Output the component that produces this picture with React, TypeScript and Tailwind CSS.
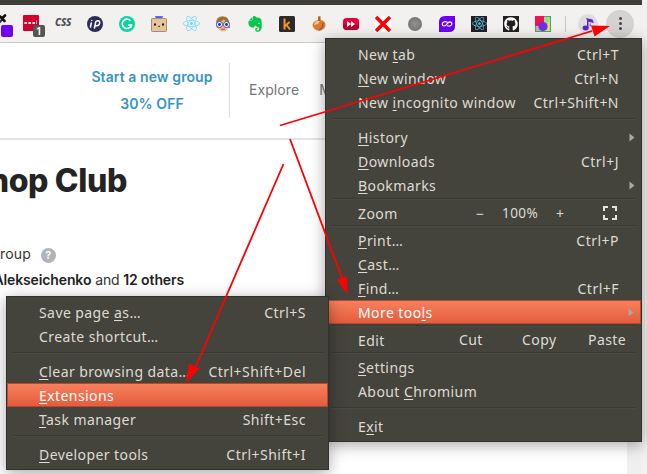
import React from "react";
import { FaReact, FaGithub, FaEvernote } from "react-icons/fa";

type RowProps = {
  label: string;
  mnemonic?: number;
  shortcut?: string;
  active?: boolean;
  arrow?: boolean;
};

function Label({ text, mnemonic }: { text: string; mnemonic?: number }) {
  if (mnemonic === undefined) return <>{text}</>;
  return (
    <>
      {text.slice(0, mnemonic)}
      <span className="underline decoration-1 underline-offset-2 [text-decoration-skip-ink:none]">{text[mnemonic]}</span>
      {text.slice(mnemonic + 1)}
    </>
  );
}

function Row({ label, mnemonic, shortcut, active, arrow }: RowProps) {
  return (
    <div
      className={
        "flex h-6 shrink-0 items-center justify-between whitespace-nowrap " +
        (active
          ? "border border-[#b14a30] bg-linear-to-b from-[#f7805e] to-[#e45c3b] pl-[31px] pr-[22px] text-white"
          : "pl-8 pr-[22px]")
      }
    >
      <span className="pt-0.5 leading-[16px]">
        <Label text={label} mnemonic={mnemonic} />
      </span>
      {shortcut && <span className="pt-0.5 leading-[16px] tracking-[0.48px]">{shortcut}</span>}
      {arrow && (
        <svg className="-mr-4 h-[9px] w-[6px]" viewBox="0 0 6 9">
          <path d="M0.5 0.5 5.5 4.5 0.5 8.5Z" fill="#a9a8a2" />
        </svg>
      )}
    </div>
  );
}

function Separator({ className }: { className: string }) {
  return (
    <div className={"shrink-0 px-[5px] " + className}>
      <div className="h-0.5 border-b border-t border-b-[#4a4a43] border-t-[#3a3a34]" />
    </div>
  );
}

function Slot({ children }: { children?: React.ReactNode }) {
  return <div className="flex w-8 shrink-0 items-center justify-center">{children}</div>;
}

function Toolbar() {
  return (
    <div className="flex h-[38px] w-[642px] items-center overflow-hidden border-b border-[#c9c9c8] bg-[#f2f1f0]">
      <div className="flex w-[15px] shrink-0">
        <svg className="h-8 w-[15px]" viewBox="0 0 15 32">
          <path d="M-1 15 2.500 11" stroke="#333" strokeWidth="2" />
          <path d="M0 8.500 4.500 13M2 10.500 5 7.500" stroke="#111" strokeWidth="2.600" strokeLinecap="round" />
          <rect x="1" y="17" width="12" height="12" rx="2" fill="#7300ee" />
        </svg>
      </div>
      <Slot>
        <svg className="h-8 w-8" viewBox="0 0 32 32">
          <rect x="8" y="7" width="16" height="16" rx="1" fill="#d5002b" />
          <path d="M9.500 15h2.500M13.500 15h2.500M17.500 15h2.500" stroke="#fff" strokeWidth="2" />
          <path d="M21.500 12.500v3.500" stroke="#f08a9c" />
          <rect x="18" y="17" width="12" height="12" rx="2" fill="#555" />
          <text x="24" y="27" textAnchor="middle" fill="#fff" fontSize="11" fontWeight="600" fontFamily="Noto Sans, sans-serif">1</text>
        </svg>
      </Slot>
      <Slot>
        <span className="pb-0.5 font-['Noto_Sans',sans-serif] text-[10px] font-extrabold italic tracking-[-0.4px] text-[#505050]">CSS</span>
      </Slot>
      <Slot>
        <svg className="size-4" viewBox="0 0 16 16" fill="none" stroke="#fff" strokeWidth="1.500" strokeLinecap="round">
          <circle cx="8" cy="8" r="8" fill="#2d2b5b" stroke="none" />
          <path d="M4.300 7 3.500 11M4.800 4.500v.1M7.500 12 8.700 6Q9 4.800 11 4.800 13 4.900 12.700 7 12.200 10 9.500 9.700H8.200" />
        </svg>
      </Slot>
      <Slot>
        <svg className="size-4" viewBox="0 0 16 16" fill="none" stroke="#fff" strokeWidth="1.600">
          <circle cx="8" cy="8" r="8" fill="#08d59b" stroke="none" />
          <path d="M11.500 4.700A4.700 4.700 0 1 0 12.500 9H9M12.500 9 11.500 12" />
        </svg>
      </Slot>
      <Slot>
        <svg className="size-4" viewBox="0 0 16 16">
          <path d="M4 0h8l-1 3H5Z" fill="#5967e8" />
          <rect x=".5" y="2.500" width="15" height="13" rx=".7" fill="#e5c59a" stroke="#a98d70" />
          <path d="M3 7.500h2v2H3ZM11 7.500h2v2h-2Z" fill="#171717" />
          <path d="M7 10q1 1.500 2 0" stroke="#432" fill="none" />
        </svg>
      </Slot>
      <Slot><FaReact className="size-[17px] text-[#76d8f8]" /></Slot>
      <Slot>
        <svg className="size-4" viewBox="0 0 16 16">
          <path d="M2 12Q-1 2 6 0.500 15-1 15 12Z" fill="#a87838" />
          <ellipse cx="8" cy="9.500" rx="5.500" ry="6" fill="#f2b780" />
          <path d="M3 5Q8 6 9 2 10 6 14 6L12 2 8 1 4 2Z" fill="#98702f" />
          <g fill="#fff" stroke="#3c58a8" strokeWidth="1"><circle cx="4.500" cy="8.500" r="3" /><circle cx="11.500" cy="8.500" r="3" /></g>
          <circle cx="4.500" cy="8.500" r="1.400" fill="#2414d8" /><circle cx="11.500" cy="8.500" r="1.400" fill="#2414d8" />
          <path d="M6 13.200h4" stroke="#c05a42" />
        </svg>
      </Slot>
      <Slot><FaEvernote className="size-[18px] text-[#08c650]" /></Slot>
      <Slot>
        <svg className="size-4" viewBox="0 0 16 16">
          <rect width="16" height="16" rx="1.500" fill="#2b2b2b" />
          <path d="M5.500 2.500v11M10.500 6 6 10M7.500 9l3.500 4.500" stroke="#f39432" strokeWidth="2" fill="none" />
        </svg>
      </Slot>
      <Slot>
        <svg className="size-4" viewBox="0 0 16 16">
          <path d="M7.500 0h2l.3 4Q15 5 14.500 10 13 14 8.500 15 2 14 1.500 9 2 5 7 4Z" fill="#d67a35" />
          <path d="M4 6Q7 4 9 5L7 8 3 9Z" fill="#f8c58b" />
          <path d="M8 1 8 5M12 7Q13 11 8.500 14" stroke="#914421" fill="none" />
        </svg>
      </Slot>
      <Slot>
        <svg className="size-4" viewBox="0 0 16 16">
          <rect y="2" width="16" height="12" rx="3.500" fill="#e6003e" />
          <path d="M0 9h16v2q-1 3-4 3H4Q1 14 0 11Z" fill="#b80031" />
          <path d="m4 5 4 3-4 3ZM8 5l4 3-4 3Z" fill="#fff" />
        </svg>
      </Slot>
      <Slot>
        <svg className="size-4 bg-white" viewBox="0 0 16 16"><path d="m1 1 14 14M15 1 1 15" stroke="#f00" strokeWidth="3.600" /></svg>
      </Slot>
      <Slot><span className="size-3.5 rounded-full bg-radial from-[#929292] to-[#6c6c6c]" /></Slot>
      <Slot>
        <svg className="size-4" viewBox="0 0 16 16">
          <path d="M6 0h10v10q0 6-6 6H0V6Q0 0 6 0Z" fill="#6c00f4" />
          <path d="M8.500 6.200Q5 4.800 3.600 7 2.500 9.500 5 10 6.800 10 8 8 9.500 5.800 11 5.800 13.500 6.300 12.600 8.700 11.200 11 8 9.800" fill="none" stroke="#fff" strokeWidth="1.200" />
        </svg>
      </Slot>
      <Slot><span className="flex size-4 items-center justify-center bg-[#202020]"><FaReact className="size-[15px] text-[#61b9e0]" /></span></Slot>
      <Slot><span className="flex size-4 items-center justify-center bg-[#202020]"><FaGithub className="size-[14px] text-white" /></span></Slot>
      <Slot>
        <svg className="size-4" viewBox="0 0 16 16">
          <path d="M0 0h9v16H0Z" fill="#ed1554" /><path d="M9 0h7v16H9Z" fill="#28b56b" />
          <path d="M0 10h9v6H0Z" fill="#35b06c" />
          <path d="M1 10h8v5H1Z" fill="#e9a0a8" />
          <path d="M9 1h6v5L9 11Z" fill="#9ed897" /><path d="m15 3v12H8Z" fill="#f1d367" />
          <circle cx="8" cy="10.500" r="4.600" fill="#6a32e5" />
        </svg>
      </Slot>
      <div className="ml-[6px] h-4 w-px shrink-0 bg-[#c8c7c6]" />
      <div className="ml-3 flex size-5 shrink-0 items-center justify-center rounded-full bg-[#dedddc]">
        <svg className="h-[14px] w-3" viewBox="0 0 12 14" fill="#5b27c7">
          <path d="M4 1 10.500 2.500 12 6 10 5.500 6.500 4.700V11H5V3Z" />
          <ellipse cx="3.600" cy="11" rx="3" ry="2.400" />
          <path d="M8 5 9.500 9.500 7.500 9Z" fill="#8c64dc" />
        </svg>
      </div>
      <div className="ml-2 flex size-7 shrink-0 flex-col items-center justify-center gap-[2px] rounded-full bg-[#d4d3d2]">
        <i className="size-[3px] rounded-full bg-[#444]" /><i className="size-[3px] rounded-full bg-[#444]" /><i className="size-[3px] rounded-full bg-[#444]" />
      </div>
    </div>
  );
}

function Page() {
  return (
    <div className="flex w-[642px]">
      <div className="h-[431px] w-[627px] bg-white font-[Inter,sans-serif]">
        <div className="flex h-[97px] border-b-2 border-[#e4e4e4] pt-5">
          <div className="flex h-[55px] w-[230px] flex-col border-r border-[#dedede] pl-[75px] text-center text-[14px] font-semibold leading-[27px] tracking-[0.08px] text-[#3795c3]">
            <span>Start a new group</span>
            <span>30% OFF</span>
          </div>
          <div className="flex h-[53px] items-center gap-5 pl-[19px] text-[14px] tracking-[0.08px] text-[#757575]">
            <span>Explore</span><span>Messages</span>
          </div>
        </div>
        <div className="flex h-[81px] w-[127px] items-center justify-end overflow-hidden whitespace-nowrap text-[32px] font-extrabold tracking-[-0.35px] text-[#242424]">
          <h1>hop Club</h1>
        </div>
        <div className="mt-[22px] flex h-6 items-center text-[14px] text-[#333]">
          <span className="flex w-[31px] justify-end pb-[3px] tracking-[0.2px]">roup</span>
          <span className="ml-[10px] flex size-[15px] items-center justify-center rounded-full bg-[#b1b5bb] text-[10px] font-bold text-white">?</span>
        </div>
        <div className="flex h-[25px] w-[184px] items-center justify-end overflow-hidden whitespace-pre text-[14px] tracking-[-0.12px] text-[#333]">
          <b className="font-semibold text-[#222]">Alekseichenko</b> and <b className="font-semibold text-[#222]">12 others</b>
        </div>
      </div>
      <div className="w-[15px] bg-[#efefef]" />
    </div>
  );
}

function MainMenu() {
  return (
    <div className="absolute left-[325px] top-[38px] flex h-[404px] w-[317px] flex-col border border-[#33332e] bg-[#44443d] pt-[3px] shadow-[0_3px_14px_rgba(0,0,0,0.35)]">
      <Row label="New tab" mnemonic={4} shortcut="Ctrl+T" />
      <Row label="New window" mnemonic={0} shortcut="Ctrl+N" />
      <Row label="New incognito window" mnemonic={4} shortcut="Ctrl+Shift+N" />
      <Separator className="h-[11px] pt-1" />
      <Row label="History" mnemonic={0} arrow />
      <Row label="Downloads" mnemonic={0} shortcut="Ctrl+J" />
      <Row label="Bookmarks" mnemonic={0} arrow />
      <Separator className="h-1 pt-px" />
      <div className="flex h-6 shrink-0 items-center pl-8">
        <span className="w-[118px]">Zoom</span>
        <span className="w-[26px]">−</span>
        <span className="w-[54px] text-[13.500px]">100%</span>
        <span className="w-[47px]">+</span>
        <svg className="size-[14px]" viewBox="0 0 14 14" fill="none" stroke="#e6e2d8" strokeWidth="2">
          <path d="M1 5V1h4M9 1h4v4M13 9v4H9M5 13H1V9" />
        </svg>
      </div>
      <Separator className="h-[3px]" />
      <Row label="Print…" mnemonic={0} shortcut="Ctrl+P" />
      <Row label="Cast…" mnemonic={0} />
      <Row label="Find…" mnemonic={0} shortcut="Ctrl+F" />
      <Row label="More tools" mnemonic={8} arrow active />
      <Separator className="h-[3px] pt-px" />
      <div className="flex h-[25px] shrink-0 items-center pl-8">
        <span className="w-[101px] pt-px">Edit</span>
        <span className="w-[63px]">Cut</span>
        <span className="w-[66px]">Copy</span>
        <span>Paste</span>
      </div>
      <Separator className="h-[3px]" />
      <Row label="Settings" mnemonic={0} />
      <Row label="About Chromium" mnemonic={6} />
      <Separator className="h-[11px] pt-1" />
      <Row label="Exit" mnemonic={1} />
    </div>
  );
}

function ToolsMenu() {
  return (
    <div className="absolute left-[6px] top-[296px] flex h-[174px] w-[323px] flex-col border border-[#33332e] bg-[#44443d] pt-[3px] shadow-[0_3px_14px_rgba(0,0,0,0.35)]">
      <Row label="Save page as…" mnemonic={10} shortcut="Ctrl+S" />
      <Row label="Create shortcut…" />
      <Separator className="h-[11px] pt-1" />
      <Row label="Clear browsing data…" mnemonic={0} shortcut="Ctrl+Shift+Del" />
      <Row label="Extensions" mnemonic={0} active />
      <Row label="Task manager" mnemonic={0} shortcut="Shift+Esc" />
      <Separator className="h-[11px] pt-1" />
      <Row label="Developer tools" mnemonic={0} shortcut="Ctrl+Shift+I" />
    </div>
  );
}

export default function App() {
  return (
    <div className="relative h-[474px] w-[647px] overflow-hidden bg-[#f2f1f0] font-['Noto_Sans',sans-serif] text-[14px] tracking-[0.42px] text-[#dfdbd2]">
      <div className="h-[5px] w-[642px] bg-[#3f3e39]" />
      <Toolbar />
      <Page />
      <MainMenu />
      <ToolsMenu />
      <svg className="absolute inset-0 h-[474px] w-[647px]" viewBox="0 0 647 474" stroke="#f00" strokeWidth="1.800" fill="#f00">
        <path d="M280 125.500 592 31M290 139 342 278M283.500 164 196 366" />
        <g stroke="none">
          <path d="M610 26 594.500 36.500 591 25.500Z" />
          <path d="M347.500 294.500 337 280 347 276Z" />
          <path d="M186 383 189 363.500 199.500 368.500Z" />
        </g>
      </svg>
    </div>
  );
}
